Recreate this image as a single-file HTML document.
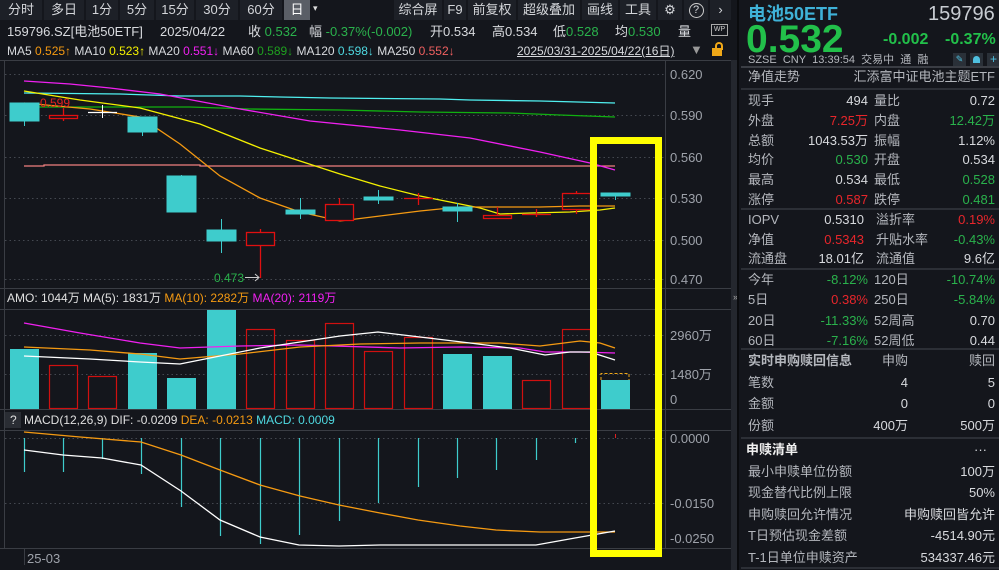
<!DOCTYPE html>
<html><head><meta charset="utf-8">
<style>
*{margin:0;padding:0;box-sizing:border-box}
body{width:999px;height:570px;background:#14161c;overflow:hidden;position:relative;font-family:"Liberation Sans","Noto Sans CJK SC",sans-serif;color:#d8dade;font-size:12px}
.a{position:absolute;white-space:nowrap}
.tb{position:absolute;top:0;height:20px;background:#1d2027;color:#d4d6da;font-size:13px;line-height:20px;text-align:center}
.g{color:#2ab24c}.r{color:#e8262b}.o{color:#f59a12}.y{color:#f4f000}.m{color:#f020f0}.c{color:#4fd8e0}.s{color:#f06060}.gr{color:#1fa01f}
.lab{color:#b4b7bd}
.rt{text-align:right}
.sep{position:absolute;height:2px;background:#2c2f36;left:741px;width:258px}
.rp{font-size:13px !important}
</style></head><body>
<div class="tb" style="left:0;width:42px">分时</div>
<div class="tb" style="left:44px;width:40px">多日</div>
<div class="tb" style="left:86px;width:32px">1分</div>
<div class="tb" style="left:120px;width:34px">5分</div>
<div class="tb" style="left:156px;width:38px">15分</div>
<div class="tb" style="left:196px;width:42px">30分</div>
<div class="tb" style="left:240px;width:42px">60分</div>
<div class="tb" style="left:284px;width:26px;background:#5a5e66;color:#fff">日</div>
<div class="a" style="left:313px;top:3px;font-size:9px;color:#ddd">▾</div>
<div class="tb" style="left:394px;width:48px">综合屏</div>
<div class="tb" style="left:444px;width:22px">F9</div>
<div class="tb" style="left:468px;width:48px">前复权</div>
<div class="tb" style="left:518px;width:62px">超级叠加</div>
<div class="tb" style="left:582px;width:36px">画线</div>
<div class="tb" style="left:620px;width:36px">工具</div>
<div class="tb" style="left:658px;width:24px">⚙</div>
<div class="tb" style="left:684px;width:24px"><span style="display:inline-block;width:15px;height:15px;border:1.5px solid #ccc;border-radius:50%;line-height:12px;font-size:11px;vertical-align:middle">?</span></div>
<div class="tb" style="left:710px;width:21px">›</div>
<div class="a" style="left:7px;top:23px;font-size:13px;line-height:17px">159796.SZ[电池50ETF]</div>
<div class="a" style="left:160px;top:23px;font-size:13px;line-height:17px">2025/04/22</div>
<div class="a" style="left:248px;top:23px;font-size:13px;line-height:17px">收 <span class="g">0.532</span></div>
<div class="a" style="left:309px;top:23px;font-size:13px;line-height:17px">幅 <span class="g">-0.37%(-0.002)</span></div>
<div class="a" style="left:430px;top:23px;font-size:13px;line-height:17px">开0.534</div>
<div class="a" style="left:492px;top:23px;font-size:13px;line-height:17px">高0.534</div>
<div class="a" style="left:553px;top:23px;font-size:13px;line-height:17px">低<span class="g">0.528</span></div>
<div class="a" style="left:615px;top:23px;font-size:13px;line-height:17px">均<span class="g">0.530</span></div>
<div class="a" style="left:678px;top:23px;font-size:13px;line-height:17px">量</div>
<div class="a" style="left:711px;top:24px;width:17px;height:12px;border:1.5px solid #aaa;font-size:7px;line-height:9px;text-align:center;color:#ccc">WP</div>
<div class="a" style="left:7px;top:43px;font-size:12px;line-height:16px">MA5 <span class="o">0.525↑</span> MA10 <span class="y">0.523↑</span> MA20 <span class="m">0.551↓</span> MA60 <span class="gr">0.589↓</span> MA120 <span class="c">0.598↓</span> MA250 <span class="s">0.552↓</span></div>
<div class="a" style="left:517px;top:43px;font-size:12px;line-height:16px;text-decoration:underline">2025/03/31-2025/04/22(16日)</div>
<div class="a" style="left:690px;top:42px;font-size:13px;color:#999">▼</div>
<div class="a" style="left:712px;top:48px;width:10px;height:8px;background:#f0a818"></div>
<div class="a" style="left:715px;top:42px;width:8px;height:8px;border:2px solid #f0a818;border-bottom:none;border-radius:4px 4px 0 0"></div>

<svg class="a" style="left:0;top:0" width="741" height="570">
<g stroke="#3a3d44" stroke-width="1">
<line x1="0" y1="60.5" x2="731" y2="60.5"/>
<line x1="0" y1="288.5" x2="731" y2="288.5"/>
<line x1="0" y1="309.5" x2="731" y2="309.5"/>
<line x1="0" y1="409.5" x2="731" y2="409.5"/>
<line x1="0" y1="430.5" x2="731" y2="430.5"/>
<line x1="0" y1="548.5" x2="731" y2="548.5"/>
<line x1="665.5" y1="60" x2="665.5" y2="548"/>
<line x1="4.5" y1="60" x2="4.5" y2="548"/>
</g>
<rect x="731" y="60" width="8" height="510" fill="#24272e"/>
<text x="733" y="300" font-size="9" fill="#aaa">»</text>
<g stroke="#444850" stroke-dasharray="1.5,3">
<line x1="5" y1="74.5" x2="665" y2="74.5"/><line x1="5" y1="115.5" x2="665" y2="115.5"/><line x1="5" y1="157.5" x2="665" y2="157.5"/><line x1="5" y1="198.5" x2="665" y2="198.5"/><line x1="5" y1="240.5" x2="665" y2="240.5"/><line x1="5" y1="279.5" x2="665" y2="279.5"/>
<line x1="5" y1="335.5" x2="665" y2="335.5"/><line x1="5" y1="374.5" x2="665" y2="374.5"/>
<line x1="5" y1="438.5" x2="665" y2="438.5"/><line x1="5" y1="503.5" x2="665" y2="503.5"/>
</g>
<g font-size="13" fill="#9ea2aa">
<text x="670" y="79">0.620</text><text x="670" y="120">0.590</text><text x="670" y="162">0.560</text><text x="670" y="203">0.530</text><text x="670" y="245">0.500</text><text x="670" y="284">0.470</text>
<text x="670" y="340">2960万</text><text x="670" y="379">1480万</text><text x="670" y="404">0</text>
<text x="670" y="443">0.0000</text><text x="670" y="508">-0.0150</text><text x="670" y="543">-0.0250</text>
<text x="27" y="563">25-03</text>
</g>
<line x1="24.5" y1="548" x2="24.5" y2="565" stroke="#3a3d44"/>
<polyline fill="none" stroke="#f08080" stroke-width="1.3" points="24,166 44,166 44,165 200,165 200,166 615,166"/>
<polyline fill="none" stroke="#50f0f0" stroke-width="1.3" points="24,93 120,94 180,96 240,96 280,97 330,98 440,99 470,100 540,101 615,103"/>
<polyline fill="none" stroke="#10b010" stroke-width="1.3" points="24,107 190,107 250,109 340,110 420,112 510,113 560,115 615,117"/>
<polyline fill="none" stroke="#f020f0" stroke-width="1.3" points="24,81 70,84 110,88 160,94 240,109 310,121 400,130 470,138 540,152 590,163 615,170"/>
<polyline fill="none" stroke="#f4f000" stroke-width="1.3" points="24,91 80,100 140,108 200,124 260,148 300,161 340,174 380,186 420,196 450,202 480,208 500,214 530,213 570,212 600,210 615,208"/>
<polyline fill="none" stroke="#f59a12" stroke-width="1.3" points="24,103 90,109 140,117 180,144 220,176 260,198 300,212 340,221 380,216 420,211 460,207 500,207 540,207 580,206 615,206"/>
<g fill="#3ecccc" stroke="#3ecccc">
<line x1="24.5" y1="103" x2="24.5" y2="126"/><rect x="10" y="103" width="29" height="18"/>
<line x1="142.5" y1="117" x2="142.5" y2="136"/><rect x="128" y="117" width="29" height="15"/>
<rect x="167" y="176" width="29" height="36"/><line x1="181.5" y1="175" x2="181.5" y2="176"/>
<line x1="221.5" y1="219" x2="221.5" y2="253"/><rect x="207" y="230" width="29" height="11"/>
<line x1="300.5" y1="198" x2="300.5" y2="219"/><rect x="286" y="210" width="29" height="4"/>
<line x1="378.5" y1="190" x2="378.5" y2="204"/><rect x="364" y="197" width="29" height="3"/>
<line x1="457.5" y1="203" x2="457.5" y2="222"/><rect x="443" y="207" width="29" height="4"/>
<line x1="615.5" y1="193" x2="615.5" y2="200"/><rect x="601" y="193" width="29" height="3"/>
</g>
<g fill="none" stroke="#e01010" stroke-width="1.3">
<line x1="63.5" y1="108" x2="63.5" y2="121"/><rect x="49.5" y="115.5" width="28" height="3" fill="#14161c"/>
<line x1="260.5" y1="229" x2="260.5" y2="278"/><rect x="246.5" y="232.5" width="28" height="13" fill="#14161c"/>
<line x1="339.5" y1="198" x2="339.5" y2="204"/><rect x="325.5" y="204.5" width="28" height="16" fill="#14161c"/>
<line x1="404" y1="198.5" x2="433" y2="198.5"/><line x1="418.5" y1="193" x2="418.5" y2="205"/>
<line x1="497.5" y1="207" x2="497.5" y2="215"/><rect x="483.5" y="215.5" width="28" height="3" fill="#14161c"/>
<line x1="522" y1="214.5" x2="551" y2="214.5"/><line x1="536.5" y1="209" x2="536.5" y2="217"/>
<line x1="576.5" y1="191" x2="576.5" y2="193"/><line x1="576.5" y1="210" x2="576.5" y2="214"/><rect x="562.5" y="193.5" width="28" height="16"/>
</g>
<line x1="88" y1="112.5" x2="117" y2="112.5" stroke="#fff" stroke-width="1.3"/><line x1="102.5" y1="105" x2="102.5" y2="118" stroke="#fff"/>
<text x="40" y="107" font-size="12" fill="#e02020">0.599</text>
<text x="214" y="282" font-size="12" fill="#2ab24c">0.473</text>
<line x1="245" y1="277.5" x2="259" y2="277.5" stroke="#ccc"/><polyline points="255,274 259,277.5 255,281" fill="none" stroke="#ccc"/>
<g fill="#3ecccc">
<rect x="10" y="349" width="29" height="60"/><rect x="128" y="353" width="29" height="56"/><rect x="167" y="378" width="29" height="31"/><rect x="207" y="310" width="29" height="99"/><rect x="443" y="354" width="29" height="55"/><rect x="483" y="356" width="29" height="53"/><rect x="601" y="380" width="29" height="29"/>
</g>
<g fill="none" stroke="#d01010" stroke-width="1.2">
<rect x="49.5" y="365.5" width="28" height="43"/><rect x="88.5" y="376.5" width="28" height="32"/><rect x="246.5" y="329.5" width="28" height="79"/><rect x="286.5" y="340.5" width="28" height="68"/><rect x="325.5" y="323.5" width="28" height="85"/><rect x="364.5" y="351.5" width="28" height="57"/><rect x="404.5" y="337.5" width="28" height="71"/><rect x="522.5" y="380.5" width="28" height="28"/><rect x="562.5" y="329.5" width="28" height="79"/>
</g>
<polyline points="601,380 601,373.5 629,373.5 629,380" fill="none" stroke="#f0a818" stroke-dasharray="3,2"/>
<polyline fill="none" stroke="#f020f0" stroke-width="1.3" points="24,323 80,333 140,343 180,348 240,346 300,345 400,348 460,347 520,348 545,352 580,352 615,353"/>
<polyline fill="none" stroke="#f59a12" stroke-width="1.3" points="24,347 90,350 140,354 180,359 240,354 300,347 360,344 420,343 500,343 540,346 580,341 600,343 615,348"/>
<polyline fill="none" stroke="#ffffff" stroke-width="1.3" points="24,356 90,359 140,362 180,364 220,356 260,348 300,342 340,336 378,332 420,337 470,343 510,348 545,355 570,352 590,352 615,360"/>
<g stroke="#3ecccc" stroke-width="1.2">
<line x1="24.5" y1="438" x2="24.5" y2="472"/><line x1="63.5" y1="438" x2="63.5" y2="472"/><line x1="102.5" y1="438" x2="102.5" y2="459"/><line x1="141.5" y1="438" x2="141.5" y2="474"/><line x1="181.5" y1="438" x2="181.5" y2="507"/><line x1="220.5" y1="438" x2="220.5" y2="536"/><line x1="260.5" y1="438" x2="260.5" y2="544"/><line x1="299.5" y1="438" x2="299.5" y2="535"/><line x1="339.5" y1="438" x2="339.5" y2="521"/><line x1="378.5" y1="438" x2="378.5" y2="503"/><line x1="418.5" y1="438" x2="418.5" y2="487"/><line x1="457.5" y1="438" x2="457.5" y2="478"/><line x1="496.5" y1="438" x2="496.5" y2="470"/><line x1="536.5" y1="438" x2="536.5" y2="460"/><line x1="575.5" y1="438" x2="575.5" y2="443"/>
</g>
<line x1="615.5" y1="434" x2="615.5" y2="438" stroke="#e02020"/>
<polyline fill="none" stroke="#f59a12" stroke-width="1.3" points="24,432 80,437 141,442 181,455 220,470 260,485 300,496 339,505 380,513 418,520 460,526 496,530 540,532 575,532 615,532"/>
<polyline fill="none" stroke="#ffffff" stroke-width="1.3" points="24,450 63,455 102,458 141,465 181,491 220,520 260,537 299,545 339,546 380,545 418,545 460,545 536,545 575,538 615,531"/>
<text x="7" y="302" font-size="12" fill="#e0e0e0">AMO: 1044万  MA(5): 1831万 <tspan fill="#f59a12">MA(10): 2282万</tspan> <tspan fill="#f020f0">MA(20): 2119万</tspan></text>
<rect x="5" y="412" width="16" height="16" fill="#2a2d34"/>
<text x="10" y="424" font-size="12" fill="#ddd">?</text>
<text x="24" y="424" font-size="12" fill="#e0e0e0">MACD(12,26,9) DIF: -0.0209 <tspan fill="#f59a12">DEA: -0.0213</tspan> <tspan fill="#4fd8e0">MACD: 0.0009</tspan></text>
<rect x="593.5" y="140.5" width="65" height="413" fill="none" stroke="#ffff00" stroke-width="7"/>
</svg>

<div class="a" style="left:737px;top:0;width:2px;height:570px;background:#0a0b0e"></div>
<div class="a" style="left:748px;top:3px;font-size:18px;font-weight:bold;color:#3fb2d8;line-height:22px">电池50ETF</div>
<div class="a" style="left:928px;top:2px;font-size:20px;color:#c8ccd2;line-height:24px">159796</div>
<div class="a" style="left:746px;top:18px;font-size:39px;font-weight:bold;color:#22c04a;line-height:44px">0.532</div>
<div class="a" style="left:883px;top:30px;font-size:16px;font-weight:bold;color:#22c04a;line-height:20px">-0.002</div>
<div class="a" style="left:945px;top:30px;font-size:16px;font-weight:bold;color:#22c04a;line-height:20px">-0.37%</div>
<div class="a lab" style="left:748px;top:53px;font-size:11px;line-height:14px">SZSE&nbsp; CNY&nbsp; 13:39:54&nbsp; 交易中&nbsp; 通&nbsp; 融</div>
<div class="a" style="left:953px;top:53px;width:13px;height:13px;background:#2a3038;color:#4fc0e0;font-size:9px;text-align:center;line-height:13px">✎</div>
<div class="a" style="left:970px;top:53px;width:13px;height:13px;background:#2a3038"><div style="margin:3px auto;width:7px;height:7px;background:#4fc0e0;border-radius:4px 4px 0 0"></div></div>
<div class="a" style="left:987px;top:53px;width:13px;height:13px;background:#2a3038;color:#4fc0e0;font-size:12px;text-align:center;line-height:13px">+</div>
<div class="sep" style="top:66px;background:#3a3d44"></div>
<div class="a lab" style="left:748px;top:69px;font-size:13px;line-height:16px">净值走势</div>
<div class="a lab rt" style="right:4px;top:69px;font-size:13px;line-height:16px">汇添富中证电池主题ETF</div>
<div class="sep" style="top:88px"></div>

<div class="a rp" style="left:741px;top:91px;width:258px;line-height:20px">
<div style="position:relative;height:19.8px"><span class="a lab" style="left:7px">现手</span><span class="a rt" style="right:131px">494</span><span class="a lab" style="left:133px">量比</span><span class="a rt" style="right:4px">0.72</span></div>
<div style="position:relative;height:19.8px"><span class="a lab" style="left:7px">外盘</span><span class="a rt r" style="right:131px">7.25万</span><span class="a lab" style="left:133px">内盘</span><span class="a rt g" style="right:4px">12.42万</span></div>
<div style="position:relative;height:19.8px"><span class="a lab" style="left:7px">总额</span><span class="a rt" style="right:131px">1043.53万</span><span class="a lab" style="left:133px">振幅</span><span class="a rt" style="right:4px">1.12%</span></div>
<div style="position:relative;height:19.8px"><span class="a lab" style="left:7px">均价</span><span class="a rt g" style="right:131px">0.530</span><span class="a lab" style="left:133px">开盘</span><span class="a rt" style="right:4px">0.534</span></div>
<div style="position:relative;height:19.8px"><span class="a lab" style="left:7px">最高</span><span class="a rt" style="right:131px">0.534</span><span class="a lab" style="left:133px">最低</span><span class="a rt g" style="right:4px">0.528</span></div>
<div style="position:relative;height:19.8px"><span class="a lab" style="left:7px">涨停</span><span class="a rt r" style="right:131px">0.587</span><span class="a lab" style="left:133px">跌停</span><span class="a rt g" style="right:4px">0.481</span></div>
</div>
<div class="sep" style="top:208px"></div>
<div class="a rp" style="left:741px;top:210px;width:258px;line-height:20px">
<div style="position:relative;height:19.5px"><span class="a lab" style="left:7px">IOPV</span><span class="a rt" style="right:135px">0.5310</span><span class="a lab" style="left:135px">溢折率</span><span class="a rt r" style="right:4px">0.19%</span></div>
<div style="position:relative;height:19.5px"><span class="a lab" style="left:7px">净值</span><span class="a rt r" style="right:135px">0.5343</span><span class="a lab" style="left:135px">升贴水率</span><span class="a rt g" style="right:4px">-0.43%</span></div>
<div style="position:relative;height:19.5px"><span class="a lab" style="left:7px">流通盘</span><span class="a rt" style="right:135px">18.01亿</span><span class="a lab" style="left:135px">流通值</span><span class="a rt" style="right:4px">9.6亿</span></div>
</div>
<div class="sep" style="top:268px"></div>
<div class="a rp" style="left:741px;top:270px;width:258px;line-height:20px">
<div style="position:relative;height:20.3px"><span class="a lab" style="left:7px">今年</span><span class="a rt g" style="right:131px">-8.12%</span><span class="a lab" style="left:133px">120日</span><span class="a rt g" style="right:4px">-10.74%</span></div>
<div style="position:relative;height:20.3px"><span class="a lab" style="left:7px">5日</span><span class="a rt r" style="right:131px">0.38%</span><span class="a lab" style="left:133px">250日</span><span class="a rt g" style="right:4px">-5.84%</span></div>
<div style="position:relative;height:20.3px"><span class="a lab" style="left:7px">20日</span><span class="a rt g" style="right:131px">-11.33%</span><span class="a lab" style="left:133px">52周高</span><span class="a rt" style="right:4px">0.70</span></div>
<div style="position:relative;height:20.3px"><span class="a lab" style="left:7px">60日</span><span class="a rt g" style="right:131px">-7.16%</span><span class="a lab" style="left:133px">52周低</span><span class="a rt" style="right:4px">0.44</span></div>
</div>
<div class="sep" style="top:348px"></div>
<div class="a rp" style="left:741px;top:351px;width:258px;line-height:20px">
<div style="position:relative;height:21.6px"><span class="a lab" style="left:7px;font-weight:bold">实时申购赎回信息</span><span class="a rt lab" style="right:91px">申购</span><span class="a rt lab" style="right:4px">赎回</span></div>
<div style="position:relative;height:21.6px"><span class="a lab" style="left:7px">笔数</span><span class="a rt" style="right:91px">4</span><span class="a rt" style="right:4px">5</span></div>
<div style="position:relative;height:21.6px"><span class="a lab" style="left:7px">金额</span><span class="a rt" style="right:91px">0</span><span class="a rt" style="right:4px">0</span></div>
<div style="position:relative;height:21.6px"><span class="a lab" style="left:7px">份额</span><span class="a rt" style="right:91px">400万</span><span class="a rt" style="right:4px">500万</span></div>
</div>
<div class="sep" style="top:437px"></div>
<div class="a rp" style="left:741px;top:440px;width:258px;line-height:20px">
<div style="position:relative;height:21.6px"><span class="a" style="left:5px;font-weight:bold;color:#f0f0f0">申赎清单</span><span class="a rt" style="right:12px">···</span></div>
<div style="position:relative;height:21.6px"><span class="a lab" style="left:7px">最小申赎单位份额</span><span class="a rt" style="right:4px">100万</span></div>
<div style="position:relative;height:21.6px"><span class="a lab" style="left:7px">现金替代比例上限</span><span class="a rt" style="right:4px">50%</span></div>
<div style="position:relative;height:21.6px"><span class="a lab" style="left:7px">申购赎回允许情况</span><span class="a rt" style="right:4px">申购赎回皆允许</span></div>
<div style="position:relative;height:21.6px"><span class="a lab" style="left:7px">T日预估现金差额</span><span class="a rt" style="right:4px">-4514.90元</span></div>
<div style="position:relative;height:21.6px"><span class="a lab" style="left:7px">T-1日单位申赎资产</span><span class="a rt" style="right:4px">534337.46元</span></div>
</div>
<div class="sep" style="top:567px"></div>
</body></html>
